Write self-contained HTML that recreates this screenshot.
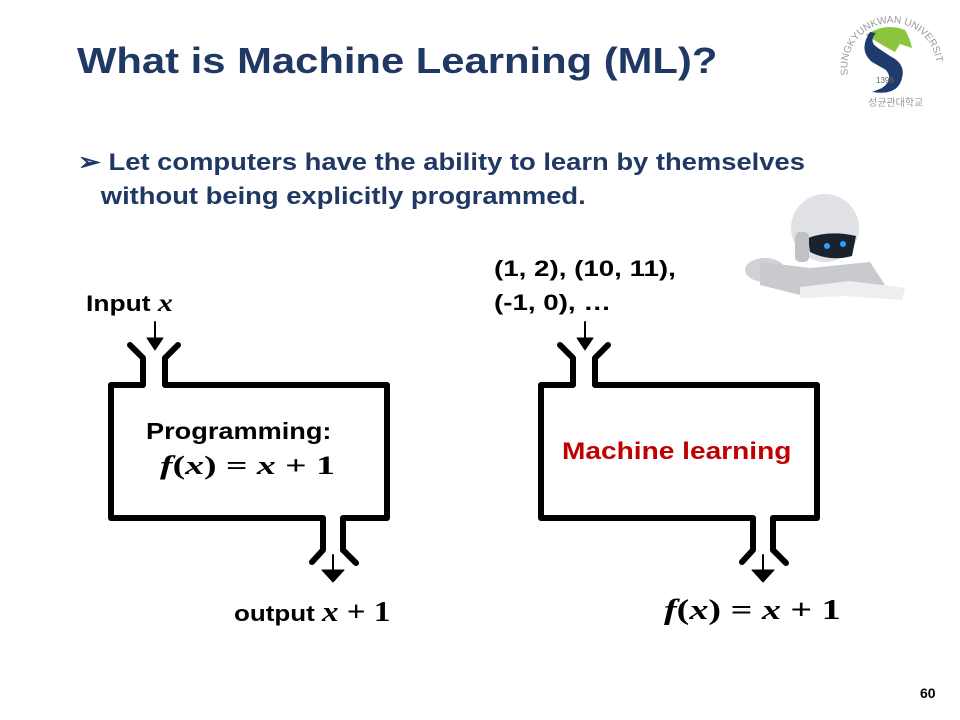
<!DOCTYPE html>
<html><head><meta charset="utf-8"><style>
body{margin:0;width:960px;height:720px;background:#fff;position:relative;overflow:hidden;font-family:"Liberation Sans",sans-serif}
.t{position:absolute;white-space:nowrap;font-weight:bold;transform-origin:0 0}
.m{font-family:"Liberation Serif",serif;font-style:italic;font-weight:bold}
.n{font-family:"Liberation Serif",serif;font-weight:bold}
</style></head><body>
<div class="t" style="left:77px;top:40px;font-size:36px;color:#1f3864;transform:scaleX(1.16)">What is Machine Learning (ML)?</div>
<div class="t" style="left:78px;top:146px;font-size:24px;color:#1f3864;line-height:34px;transform:scaleX(1.14)">➢ Let computers have the ability to learn by themselves<br>&nbsp;&nbsp;&nbsp;without being explicitly programmed.</div>
<div class="t" style="left:86px;top:290px;font-size:22px;color:#000;transform:scaleX(1.2)">Input <span class="m" style="font-size:25px">x</span></div>
<div class="t" style="left:494px;top:252px;font-size:22px;color:#000;line-height:34px;transform:scaleX(1.26)">(1, 2), (10, 11),<br>(-1, 0), …</div>
<div class="t" style="left:146px;top:418px;font-size:23px;color:#000;transform:scaleX(1.18)">Programming:</div>
<div class="t" style="left:160px;top:450px;font-size:26px;color:#000;transform:scaleX(1.45)"><span class="m">f</span><span class="n">(</span><span class="m">x</span><span class="n">) = </span><span class="m">x</span><span class="n"> + 1</span></div>
<div class="t" style="left:562px;top:438px;font-size:24px;color:#c00000;transform:scaleX(1.17)">Machine learning</div>
<div class="t" style="left:234px;top:597px;font-size:22px;color:#000;transform:scaleX(1.18)">output <span class="m" style="font-size:28px">x</span><span class="n" style="font-size:28px"> + 1</span></div>
<div class="t" style="left:664px;top:594px;font-size:28px;color:#000;transform:scaleX(1.36)"><span class="m">f</span><span class="n">(</span><span class="m">x</span><span class="n">) = </span><span class="m">x</span><span class="n"> + 1</span></div>
<div class="t" style="left:920px;top:685px;font-size:14px;color:#000">60</div>
<svg width="960" height="720" style="position:absolute;left:0;top:0" fill="none" stroke="#000" stroke-width="6" stroke-linejoin="round" stroke-linecap="round">
<g>
<path d="M143 385H111V518H323V550L312 562M343 550V518H387V385H165V358L178 345M143 385V358L130 345"/>
<path d="M155 322V344" stroke-width="2"/><path d="M147 338L155 350L163 338Z" fill="#000" stroke-width="1"/>
<path d="M333 555V572" stroke-width="2"/><path d="M322 570L333 582L344 570Z" fill="#000" stroke-width="1"/>
<path d="M343 550L356 563"/>
</g>
<g transform="translate(430,0)">
<path d="M143 385H111V518H323V550L312 562M343 550V518H387V385H165V358L178 345M143 385V358L130 345"/>
<path d="M155 322V344" stroke-width="2"/><path d="M147 338L155 350L163 338Z" fill="#000" stroke-width="1"/>
<path d="M333 555V572" stroke-width="2"/><path d="M322 570L333 582L344 570Z" fill="#000" stroke-width="1"/>
<path d="M343 550L356 563"/>
</g>
<g stroke="none">
<ellipse cx="765" cy="270" rx="20" ry="12" fill="#d0d2d5"/>
<path d="M760 262L810 268L870 262L885 285L800 295L760 285Z" fill="#c8cacd"/>
<circle cx="825" cy="228" r="34" fill="#dfe1e4"/>
<path d="M808 238Q830 230 856 236L852 256Q830 262 810 252Z" fill="#1a2230"/>
<circle cx="827" cy="246" r="3" fill="#2aa0ff"/><circle cx="843" cy="244" r="3" fill="#2aa0ff"/>
<rect x="795" y="232" width="14" height="30" rx="5" fill="#bfc1c4"/>
<path d="M800 287L850 281L905 288L902 300L845 296L800 298Z" fill="#eceef0"/>
</g>
<g stroke="none">
<path d="M866 35Q885 22 905 30Q910 38 912 48L900 44L895 52L884 46Z" fill="#8cc63f"/>
<path d="M870 32Q858 50 872 62L886 70Q894 80 882 88L872 92Q898 96 902 78Q906 64 890 56L878 48Q868 42 876 33Z" fill="#1e3a6e"/>
<path id="arc" d="M848 75A44 44 0 0 1 936 60" fill="none"/>
<text font-size="10" fill="#999" font-family="Liberation Sans"><textPath href="#arc">SUNGKYUNKWAN UNIVERSITY</textPath></text>
<text x="876" y="83" font-size="8" fill="#666" font-family="Liberation Sans">1398</text>
<text x="868" y="106" font-size="10" fill="#999" font-family="Noto Sans CJK KR,sans-serif">성균관대학교</text>
</g>
</svg>
</body></html>
